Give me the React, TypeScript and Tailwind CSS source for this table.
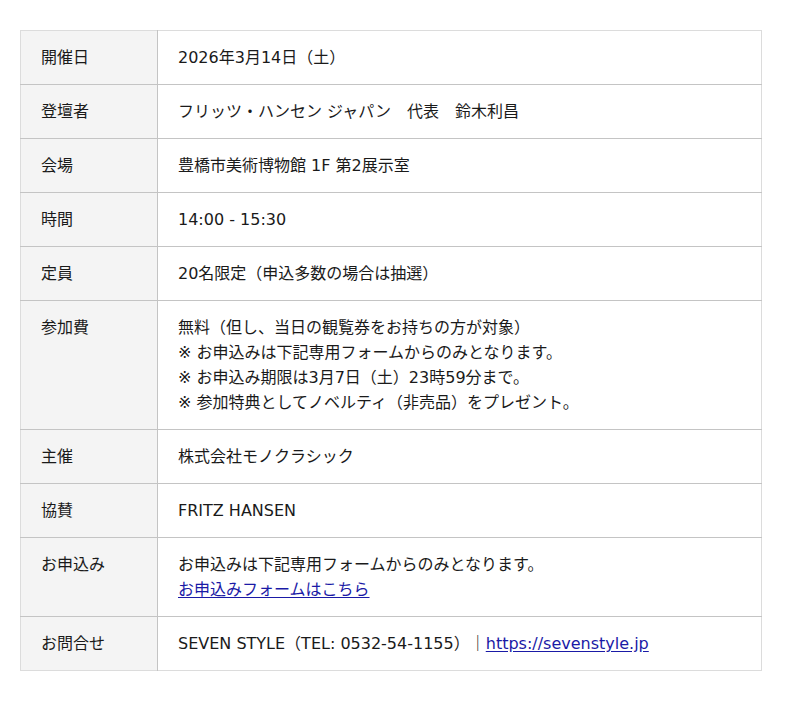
import React from 'react';

const rows: { label: string; lines: React.ReactNode[] }[] = [
  { label: '開催日', lines: ['2026年3月14日（土）'] },
  { label: '登壇者', lines: ['フリッツ・ハンセン ジャパン　代表　鈴木利昌'] },
  { label: '会場', lines: ['豊橋市美術博物館 1F 第2展示室'] },
  { label: '時間', lines: ['14:00 - 15:30'] },
  { label: '定員', lines: ['20名限定（申込多数の場合は抽選）'] },
  {
    label: '参加費',
    lines: [
      '無料（但し、当日の観覧券をお持ちの方が対象）',
      '※ お申込みは下記専用フォームからのみとなります。',
      '※ お申込み期限は3月7日（土）23時59分まで。',
      '※ 参加特典としてノベルティ（非売品）をプレゼント。',
    ],
  },
  { label: '主催', lines: ['株式会社モノクラシック'] },
  { label: '協賛', lines: ['FRITZ HANSEN'] },
  {
    label: 'お申込み',
    lines: [
      'お申込みは下記専用フォームからのみとなります。',
      <a href="#" className="text-[#1a1aa6] underline underline-offset-2">
        お申込みフォームはこちら
      </a>,
    ],
  },
  {
    label: 'お問合せ',
    lines: [
      <>
        SEVEN STYLE（TEL: 0532-54-1155）｜
        <a href="#" className="text-[#1a1aa6] underline underline-offset-2">
          https://sevenstyle.jp
        </a>
      </>,
    ],
  },
];

export default function App() {
  return (
    <div className="bg-white min-h-[701px] pt-[30px] pl-[20px] font-['DejaVu_Sans','Noto_Sans_CJK_JP',sans-serif] text-[16px] leading-[25px] text-[#1a1a1a]">
      <table className="w-[742px] border-collapse border border-[#dcdcdc]">
        <tbody>
          {rows.map((row, i) => (
            <tr
              key={row.label}
              className={i < rows.length - 1 ? 'border-b border-[#c4c4c4]' : ''}
            >
              <th className="w-[137px] bg-[#f4f4f4] border-r border-[#c4c4c4] px-[20px] py-[14px] text-left align-top font-normal">
                {row.label}
              </th>
              <td className="px-[20px] py-[14px] align-top">
                {row.lines.map((line, j) => (
                  <div key={j}>{line}</div>
                ))}
              </td>
            </tr>
          ))}
        </tbody>
      </table>
    </div>
  );
}
